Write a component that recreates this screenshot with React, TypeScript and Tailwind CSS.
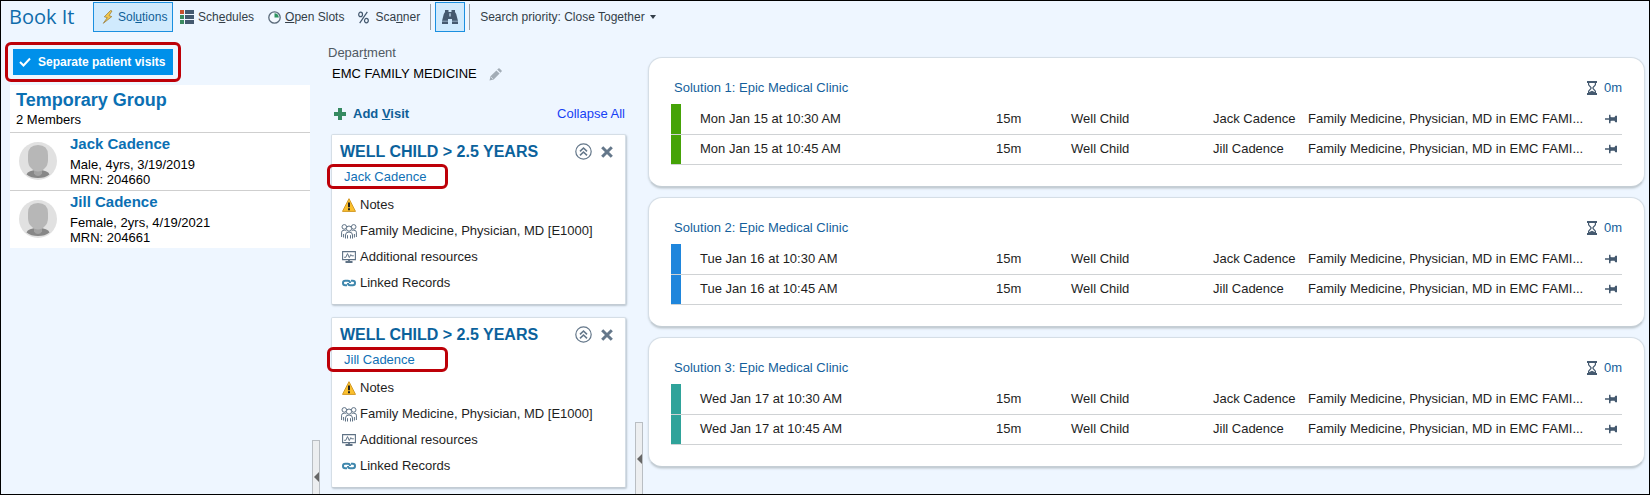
import type { ReactNode } from "react";

const patients = [
  { name: "Jack Cadence", details: "Male, 4yrs, 3/19/2019", mrn: "204660" },
  { name: "Jill Cadence", details: "Female, 2yrs, 4/19/2021", mrn: "204661" },
];

const solutions = [
  { id: 1, day: "Mon Jan 15", bar: "bg-[#45a307]" },
  { id: 2, day: "Tue Jan 16", bar: "bg-[#1f86dc]" },
  { id: 3, day: "Wed Jan 17", bar: "bg-[#2fa39a]" },
];

const slots = [
  { time: "10:30 AM", patient: "Jack Cadence" },
  { time: "10:45 AM", patient: "Jill Cadence" },
];

function BoltIcon() {
  return (
    <svg width="12" height="16" viewBox="0 0 12 16" aria-hidden="true">
      <path d="M8.500 1.500 2.300 7.800 5.300 8.600 1.300 14.300 9.800 7.600 7 6.600 10 2z" fill="#f3c84b" stroke="#9a8043" strokeWidth="0.800" strokeLinejoin="round" />
    </svg>
  );
}

function ScheduleIcon() {
  return (
    <svg width="14" height="14" viewBox="0 0 14 14" aria-hidden="true">
      <path d="M0 0h4v4H0z" fill="#c8502e" />
      <path d="M0 5h4v4H0zM0 10h4v4H0z" fill="#3a8a5f" />
      <path d="M5 0h9v4H5zM5 5h9v4H5zM5 10h9v4H5z" fill="#44596f" />
    </svg>
  );
}

function SlotClockIcon() {
  return (
    <svg width="13" height="13" viewBox="0 0 13 13" aria-hidden="true">
      <circle cx="6.5" cy="6.5" r="5.7" fill="#f4f9ff" stroke="#5b6b7b" strokeWidth="1.3" />
      <path d="M6.500 6.500V2.200a4.300 4.300 0 0 1 4.300 4.300z" fill="#2f9461" />
    </svg>
  );
}

function PercentIcon() {
  return (
    <svg width="11" height="13" viewBox="0 0 11 13" fill="none" stroke="#44596f" strokeWidth="1.2" aria-hidden="true">
      <path d="M9.3.8 1.7 12.2" />
      <ellipse cx="2.6" cy="3.4" rx="1.9" ry="2.2" />
      <ellipse cx="8.4" cy="9.6" rx="1.9" ry="2.2" />
    </svg>
  );
}

function BinocularsIcon() {
  return (
    <svg width="16" height="14" viewBox="0 0 16 14" fill="#44596f" aria-hidden="true">
      <path d="M3 0h3.500v2h3V0H13v2l1.200 2L16 11v3h-6V9H6v5H0v-3l1.800-7L3 2z" />
      <path d="M7.400 3.200h1.200v3.400H7.400z" fill="#d0eafd" />
      <path d="M0 11.200h6M10 11.200h6" stroke="#d0eafd" strokeWidth=".6" />
    </svg>
  );
}

function CheckIcon() {
  return (
    <svg width="12" height="10" viewBox="0 0 12 10" fill="none" stroke="#fff" strokeWidth="2" aria-hidden="true">
      <path d="m1 5 3.500 3.500L11 1.500" />
    </svg>
  );
}

function PencilIcon() {
  return (
    <svg width="13" height="13" viewBox="0 0 13 13" fill="#a3adb7" aria-hidden="true">
      <path d="M1.500 8.300 7.400 2.400l3.200 3.200-5.900 5.900L.5 12.500zM8.200 1.600 9.400.4q.6-.5 1.200 0l2 2q.5.6 0 1.200l-1.200 1.200z" />
      <path d="m2.300 9.300 1.400 1.400" stroke="#eef6ff" strokeWidth=".9" />
    </svg>
  );
}

function AddIcon() {
  return (
    <svg width="12" height="12" viewBox="0 0 12 12" fill="#358a61" aria-hidden="true">
      <path d="M4 0h4v4h4v4H8v4H4V8H0V4h4z" />
    </svg>
  );
}

function CollapseIcon() {
  return (
    <svg width="17" height="17" viewBox="0 0 17 17" fill="none" stroke="#64778a" aria-hidden="true">
      <circle cx="8.500" cy="8.500" r="7.700" strokeWidth="1.200" />
      <path d="M5 8.300 8.500 5 12 8.300M5 12.300 8.500 9l3.500 3.300" strokeWidth="1.600" />
    </svg>
  );
}

function CloseIcon() {
  return (
    <svg width="12" height="12" viewBox="0 0 12 12" fill="none" stroke="#64778a" strokeWidth="3" aria-hidden="true">
      <path d="m1.200 1.200 9.600 9.600M10.800 1.200 1.200 10.800" />
    </svg>
  );
}

function WarningIcon() {
  return (
    <svg width="14" height="14" viewBox="0 0 14 14" aria-hidden="true">
      <path d="M7 .7 13.500 13.400H.5z" fill="#fbc02d" stroke="#d39a26" strokeWidth="1" strokeLinejoin="round" />
      <path d="M6 4.500h2v4.700H6zM6 10.300h2v1.900H6z" fill="#222" />
    </svg>
  );
}

function PeopleIcon() {
  return (
    <svg width="16" height="15" viewBox="0 0 16 15" fill="none" stroke="#5f7285" strokeWidth="1" aria-hidden="true">
      <circle cx="3.300" cy="2.900" r="2.300" />
      <circle cx="12.700" cy="2.900" r="2.300" />
      <circle cx="8" cy="4.600" r="2.600" fill="#fff" />
      <path d="M4.500 14.500V11q0-3 3.500-3t3.500 3v3.500M6.500 14.500v-3.300M9.500 14.500v-3.300M.6 13V8.200q0-2 2.700-2 1.400 0 2 .7M15.400 13V8.200q0-2-2.700-2-1.400 0-2 .7M2.600 13.500V10M13.400 13.500V10" />
    </svg>
  );
}

function MonitorIcon() {
  return (
    <svg width="14" height="12" viewBox="0 0 14 12" fill="none" stroke="#5f7285" aria-hidden="true">
      <path d="M.6.600h12.800v8H.6z" strokeWidth="1.100" />
      <path d="M2.200 6.300h1.600L5.500 2.600l1.800 4 1.500-3 .8 1.200h2.200" />
      <path d="M7 8.600v2M3.500 11h7" strokeWidth="1.800" />
    </svg>
  );
}

function LinkIcon() {
  return (
    <svg width="14" height="8" viewBox="0 0 14 8" fill="none" stroke="#3f87ad" strokeWidth="2" aria-hidden="true">
      <path d="M5 6.300H3.200Q1 6.300 1 4t2.200-2.300h2.600Q8 1.700 8 4" />
      <path d="M9 1.700h1.800Q13 1.700 13 4t-2.200 2.300H8.200Q6 6.300 6 4" />
    </svg>
  );
}

function HourglassIcon() {
  return (
    <svg width="10" height="14" viewBox="0 0 10 14" aria-hidden="true">
      <path d="M1.600 1.500v2.300L4 6.500v1L1.600 10.200v2.300M8.400 1.500v2.300L6 6.500v1l2.400 2.700v2.300" fill="none" stroke="#44596f" strokeWidth="1.200" />
      <path d="M0 0h10v2H0zM0 12h10v2H0zM1.800 12.500v-1.300L5 9.800l3.200 1.400v1.300z" fill="#44596f" />
    </svg>
  );
}

function PinIcon() {
  return (
    <svg width="12" height="10" viewBox="0 0 12 10" fill="#44596f" aria-hidden="true">
      <path d="M0 4.300h4V.8h1.500v1.900l1 .6h3l.8-1.500H12v6.400h-1.700l-.8-1.500h-3l-1 .6v1.900H4V5.700H0z" />
    </svg>
  );
}

function Avatar() {
  return (
    <svg width="38" height="38" viewBox="0 0 38 38" className="shrink-0" aria-hidden="true">
      <circle cx="19" cy="19" r="19" fill="#e1e1e1" />
      <path d="M7.500 32.500q1.500-4.500 11.500-4.500t11.500 4.500Q26 36 19 36T7.500 32.500z" fill="#878787" />
      <path d="M15 27h8v4.500q-1.500 2.500-4 2.500t-4-2.500z" fill="#a2a2a2" />
      <path d="M9 13Q9 3 19 3t10 10v5q0 5-3 8-3 3.500-7 3.500T12 26q-3-3-3-8z" fill="#b7b7b7" />
    </svg>
  );
}

function Callout({ children, className }: { children: ReactNode; className: string }) {
  return <div className={`rounded-md border-3 border-[#bd0008] ${className}`}>{children}</div>;
}

function Splitter({ label, className }: { label: string; className: string }) {
  return (
    <button
      type="button"
      aria-label={label}
      className={`flex w-2 shrink-0 items-center justify-center self-end border border-b-0 border-[#b9bec3] bg-[#eceef0] ${className}`}
    >
      <svg width="5" height="10" viewBox="0 0 5 10" className="shrink-0" aria-hidden="true">
        <path d="M5 0v10L0 5z" fill="#666" />
      </svg>
    </button>
  );
}

function Toolbar() {
  return (
    <header className="flex h-8 items-center pl-2 text-xs text-[#333e48]">
      <h1 className="w-[84px] font-['Open_Sans',sans-serif] text-xl leading-8 font-medium text-[#0f6cab]">Book It</h1>
      <button type="button" className="flex h-[30px] w-20 items-center gap-1 border border-[#1a8fe0] bg-[#d0eafd] pl-2 text-[#0f5f98]">
        <BoltIcon />
        <span>Sol<u>u</u>tions</span>
      </button>
      <button type="button" className="ml-[7px] flex items-center gap-1">
        <ScheduleIcon />
        <span>Sch<u>e</u>dules</span>
      </button>
      <button type="button" className="ml-[14px] flex items-center gap-1">
        <SlotClockIcon />
        <span><u>O</u>pen Slots</span>
      </button>
      <button type="button" className="ml-[14px] flex items-center gap-1.5">
        <PercentIcon />
        <span>Sca<u>n</u>ner</span>
      </button>
      <span className="ml-[10px] h-[26px] w-px bg-[#9aa1a8]" />
      <button type="button" aria-label="Find" className="mx-1 flex size-[30px] items-center justify-center border border-[#1a8fe0] bg-[#d0eafd]">
        <BinocularsIcon />
      </button>
      <span className="h-[26px] w-px bg-[#9aa1a8]" />
      <button type="button" className="ml-[10px] flex items-center gap-[5px]">
        <span>Search priority: Close Together</span>
        <svg width="6" height="4" viewBox="0 0 6 4" aria-hidden="true">
          <path d="M0 0h6L3 4z" fill="#333e48" />
        </svg>
      </button>
    </header>
  );
}

function PatientPanel() {
  return (
    <section className="min-w-0 flex-1 pl-1 pt-[9px]">
      <Callout className="w-[176px] p-1">
        <button type="button" className="ml-px flex h-[26px] w-40 items-center gap-[7px] bg-[#0090ea] pl-1.5 text-xs font-bold whitespace-nowrap text-white">
          <CheckIcon />
          <span>Separate patient visits</span>
        </button>
      </Callout>
      <div className="ml-[5px] mt-[3px] w-[300px] bg-white text-black">
        <div className="h-[47px] pt-[3px] pl-[6px]">
          <h2 className="text-lg leading-6 font-bold text-[#0b70b3]">Temporary Group</h2>
          <p className="leading-[15px]">2 Members</p>
        </div>
        {patients.map((p) => (
          <div key={p.mrn} className="flex h-[58px] items-center gap-[13px] border-t border-[#cfcfcf] pb-0.5 pl-[9px]">
            <Avatar />
            <div className="leading-[15px]">
              <h3 className="mb-[3px] text-[15px] leading-5 font-bold text-[#0b70b3]">{p.name}</h3>
              <p>{p.details}</p>
              <p>MRN: {p.mrn}</p>
            </div>
          </div>
        ))}
      </div>
    </section>
  );
}

function VisitItem({ icon, children }: { icon: ReactNode; children: ReactNode }) {
  return (
    <li className="flex h-[26px] items-center gap-[3px] whitespace-nowrap">
      <span className="flex w-4 justify-center">{icon}</span>
      {children}
    </li>
  );
}

function VisitCard({ patient }: { patient: string }) {
  return (
    <article className="h-[171px] rounded-xs border border-[#d5dee6] border-b-[#c3ccd4] bg-white shadow-[1px_1px_2px_#b9c4ce]">
      <div className="flex h-[29px] items-center pt-1 pr-3 pl-2">
        <h3 className="flex-1 text-base leading-6 font-bold whitespace-nowrap text-[#0b629c]">WELL CHILD &gt; 2.5 YEARS</h3>
        <button type="button" aria-label="Collapse visit"><CollapseIcon /></button>
        <button type="button" aria-label="Remove visit" className="ml-[9px]"><CloseIcon /></button>
      </div>
      <Callout className="-ml-[5px] flex h-[25px] w-[121px] items-center pl-[14px]">
        <a href="#patient" className="text-[#0f70b5]">{patient}</a>
      </Callout>
      <ul className="pt-[3px] pl-[9px] text-[#1e1e1e]">
        <VisitItem icon={<WarningIcon />}>Notes</VisitItem>
        <VisitItem icon={<PeopleIcon />}>Family Medicine, Physician, MD [E1000]</VisitItem>
        <VisitItem icon={<MonitorIcon />}>Additional resources</VisitItem>
        <VisitItem icon={<LinkIcon />}>Linked Records</VisitItem>
      </ul>
    </article>
  );
}

function VisitPanel() {
  return (
    <section className="min-w-0 flex-1 pr-[9px] pb-[6px] pl-[11px]">
      <div className="-ml-[3px] pt-3">
        <p className="leading-4 text-[#505a63]">Depar<u>t</u>ment</p>
        <div className="mt-[3px] flex h-5 items-center gap-3 pl-1 text-black">
          <span>EMC FAMILY MEDICINE</span>
          <button type="button" aria-label="Edit department"><PencilIcon /></button>
        </div>
      </div>
      <div className="mt-5 flex h-5 items-center justify-between pr-px pl-[3px]">
        <button type="button" className="flex items-center gap-[7px] font-bold text-[#0f5f98]">
          <AddIcon />
          <span>Add <u>V</u>isit</span>
        </button>
        <button type="button" className="text-[#1640f5]">Collapse All</button>
      </div>
      <div className="mt-[10px] flex flex-col gap-3">
        {patients.map((p) => (
          <VisitCard key={p.mrn} patient={p.name} />
        ))}
      </div>
    </section>
  );
}

function SolutionCard({ id, day, bar }: { id: number; day: string; bar: string }) {
  return (
    <article className="h-[131px] rounded-[14px] border border-[#d5dee6] border-b-2 border-b-[#c5ced5] bg-white pt-[19px] pr-[22px] pl-[22px] shadow-[0_1px_2px_#cdd6de]">
      <div className="flex h-[22px] items-center justify-between pl-[3px] text-[#155f9c]">
        <h2>Solution {id}: Epic Medical Clinic</h2>
        <span className="flex items-center gap-[7px]"><HourglassIcon />0m</span>
      </div>
      <table className="mt-[5px] w-full table-fixed text-left whitespace-nowrap text-[#1e1e1e]">
        <colgroup>
          <col className="w-[10px]" />
          <col />
          <col className="w-[75px]" />
          <col className="w-[142px]" />
          <col className="w-[95px]" />
          <col className="w-[297px]" />
          <col className="w-[17px]" />
        </colgroup>
        <tbody>
          {slots.map((s) => (
            <tr key={s.time} className="h-[30px] border-b border-[#cfd2d4]">
              <td className={`p-0 ${bar}`} />
              <td className="p-0 pl-[19px]">{day} at {s.time}</td>
              <td className="p-0">15m</td>
              <td className="p-0">Well Child</td>
              <td className="p-0">{s.patient}</td>
              <td className="p-0">Family Medicine, Physician, MD in EMC FAMI...</td>
              <td className="p-0">
                <button type="button" aria-label="Pin slot" className="block"><PinIcon /></button>
              </td>
            </tr>
          ))}
        </tbody>
      </table>
    </article>
  );
}

export default function App() {
  return (
    <div className="flex min-h-screen flex-col border border-black bg-[#eef6ff] font-['Liberation_Sans',Arial,sans-serif] text-[13px]">
      <Toolbar />
      <div className="flex flex-1">
        <div className="flex w-[319px] shrink-0">
          <PatientPanel />
          <Splitter label="Collapse patient panel" className="h-[54px] pt-[18px]" />
        </div>
        <div className="flex w-[323px] shrink-0">
          <VisitPanel />
          <Splitter label="Collapse visit panel" className="h-[72px]" />
        </div>
        <main className="flex min-w-0 flex-1 flex-col gap-[9px] pt-6 pr-1 pl-[5px]">
          {solutions.map((s) => (
            <SolutionCard key={s.id} {...s} />
          ))}
        </main>
      </div>
    </div>
  );
}
